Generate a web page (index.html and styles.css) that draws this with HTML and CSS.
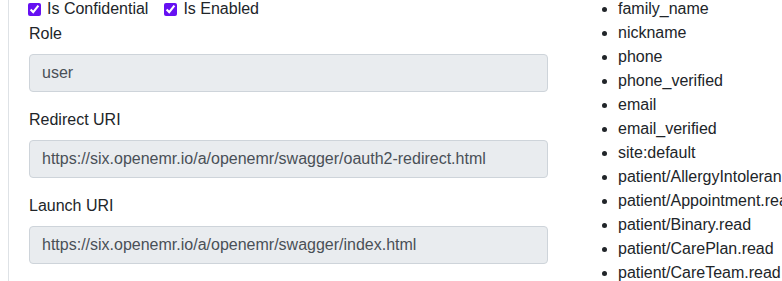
FILE: index.html
```html
<!DOCTYPE html>
<html lang="en">
<head>
<meta charset="utf-8">
<title>Client</title>
<link rel="stylesheet" href="styles.css">
</head>
<body>
<div class="page">
  <div class="left">
    <div class="checks">
      <label class="check"><input type="checkbox" checked> Is Confidential</label>
      <label class="check"><input type="checkbox" checked> Is Enabled</label>
    </div>
    <div class="group">
      <label class="lbl">Role</label>
      <div class="field">user</div>
    </div>
    <div class="group">
      <label class="lbl">Redirect URI</label>
      <div class="field">https://six.openemr.io/a/openemr/swagger/oauth2-redirect.html</div>
    </div>
    <div class="group">
      <label class="lbl">Launch URI</label>
      <div class="field">https://six.openemr.io/a/openemr/swagger/index.html</div>
    </div>
  </div>
  <div class="right">
    <ul class="scopes">
      <li>family_name</li>
      <li>nickname</li>
      <li>phone</li>
      <li>phone_verified</li>
      <li>email</li>
      <li>email_verified</li>
      <li>site:default</li>
      <li>patient/AllergyIntolerance.read</li>
      <li>patient/Appointment.read</li>
      <li>patient/Binary.read</li>
      <li>patient/CarePlan.read</li>
      <li>patient/CareTeam.read</li>
      <li>patient/Condition.read</li>
    </ul>
  </div>
</div>
</body>
</html>
```
FILE: styles.css
```css
html, body {
  margin: 0;
  padding: 0;
  overflow: hidden;
  background: #fff;
}
body {
  font-family: "Liberation Sans", Arial, sans-serif;
  font-size: 16px;
  line-height: 24px;
  color: #212529;
}
.page {
  display: flex;
  margin-left: 8px;
  margin-top: -4px;
  width: 900px;
}
.left {
  border-left: 1px solid #dee2e6;
  padding-left: 20px;
  width: 519px;
  flex: none;
  padding-bottom: 40px;
}
.checks {
  display: flex;
  gap: 16px;
  height: 24px;
  padding-top: 1px;
  margin-left: -1px;
  margin-bottom: 1px;
}
.check {
  display: flex;
  align-items: center;
}
.check input {
  margin: 0 6px 0 0;
  width: 13px;
  height: 13px;
  accent-color: #6610f2;
}
.group {
  margin-bottom: 16px;
}
.lbl {
  display: block;
  margin-bottom: 8px;
}
.field {
  box-sizing: border-box;
  height: 38px;
  padding: 6px 12px;
  border: 1px solid #ced4da;
  border-radius: 4px;
  background: #e9ecef;
  color: #495057;
  white-space: nowrap;
  overflow: hidden;
}
.right {
  padding-left: 30px;
  padding-top: 1px;
  flex: none;
}
.scopes {
  margin: 0;
  padding-left: 40px;
  white-space: nowrap;
}
```
